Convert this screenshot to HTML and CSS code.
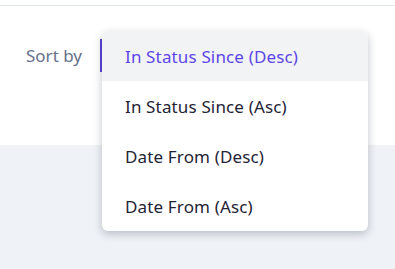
FILE: index.html
```html
<!DOCTYPE html>
<html lang="en">
<head>
  <meta charset="UTF-8">
  <title>Sort by</title>
  <link rel="stylesheet" href="styles.css">
</head>
<body>
  <div class="topbar"></div>
  <section class="panel">
    <div class="sort-row">
      <span class="sort-label">Sort by</span>
      <div class="sort-select">
        <ul class="sort-menu">
          <li class="sort-option active">In Status Since (Desc)</li>
          <li class="sort-option">In Status Since (Asc)</li>
          <li class="sort-option">Date From (Desc)</li>
          <li class="sort-option">Date From (Asc)</li>
        </ul>
      </div>
    </div>
  </section>
  <main class="content"></main>
</body>
</html>
```

FILE: styles.css
```css
body {
  margin: 0;
  min-height: 100vh;
  display: flex;
  flex-direction: column;
  font-family: "Noto Sans", sans-serif;
  background-color: #eff2f7;
}
.topbar {
  height: 5px;
  background: #fff;
  border-bottom: 1px solid #e3e7ef;
}
.panel {
  position: relative;
  z-index: 2;
  background: #fff;
  height: 139px;
  padding: 33px 0 0 26px;
  box-sizing: border-box;
}
.content {
  flex: 1;
}
.sort-row {
  display: flex;
  align-items: center;
  gap: 18px;
}
.sort-label {
  font-size: 17px;
  color: #67718a;
}
.sort-select {
  position: relative;
  width: 240px;
  height: 33px;
  border-left: 2px solid #5a40d8;
  box-sizing: border-box;
}
.sort-menu {
  position: absolute;
  top: -8px;
  left: 0;
  z-index: 10;
  width: 266px;
  margin: 0;
  padding: 0;
  list-style: none;
  background: #fff;
  border-radius: 6px;
  box-shadow: 0 3px 8px rgba(40, 50, 70, 0.28);
  overflow: hidden;
}
.sort-option {
  height: 50px;
  display: flex;
  align-items: center;
  padding-left: 23px;
  font-size: 17px;
  letter-spacing: 0.15px;
  color: #1f2336;
}
.sort-option.active {
  background: #f2f3f5;
  color: #5d46e6;
}
```
